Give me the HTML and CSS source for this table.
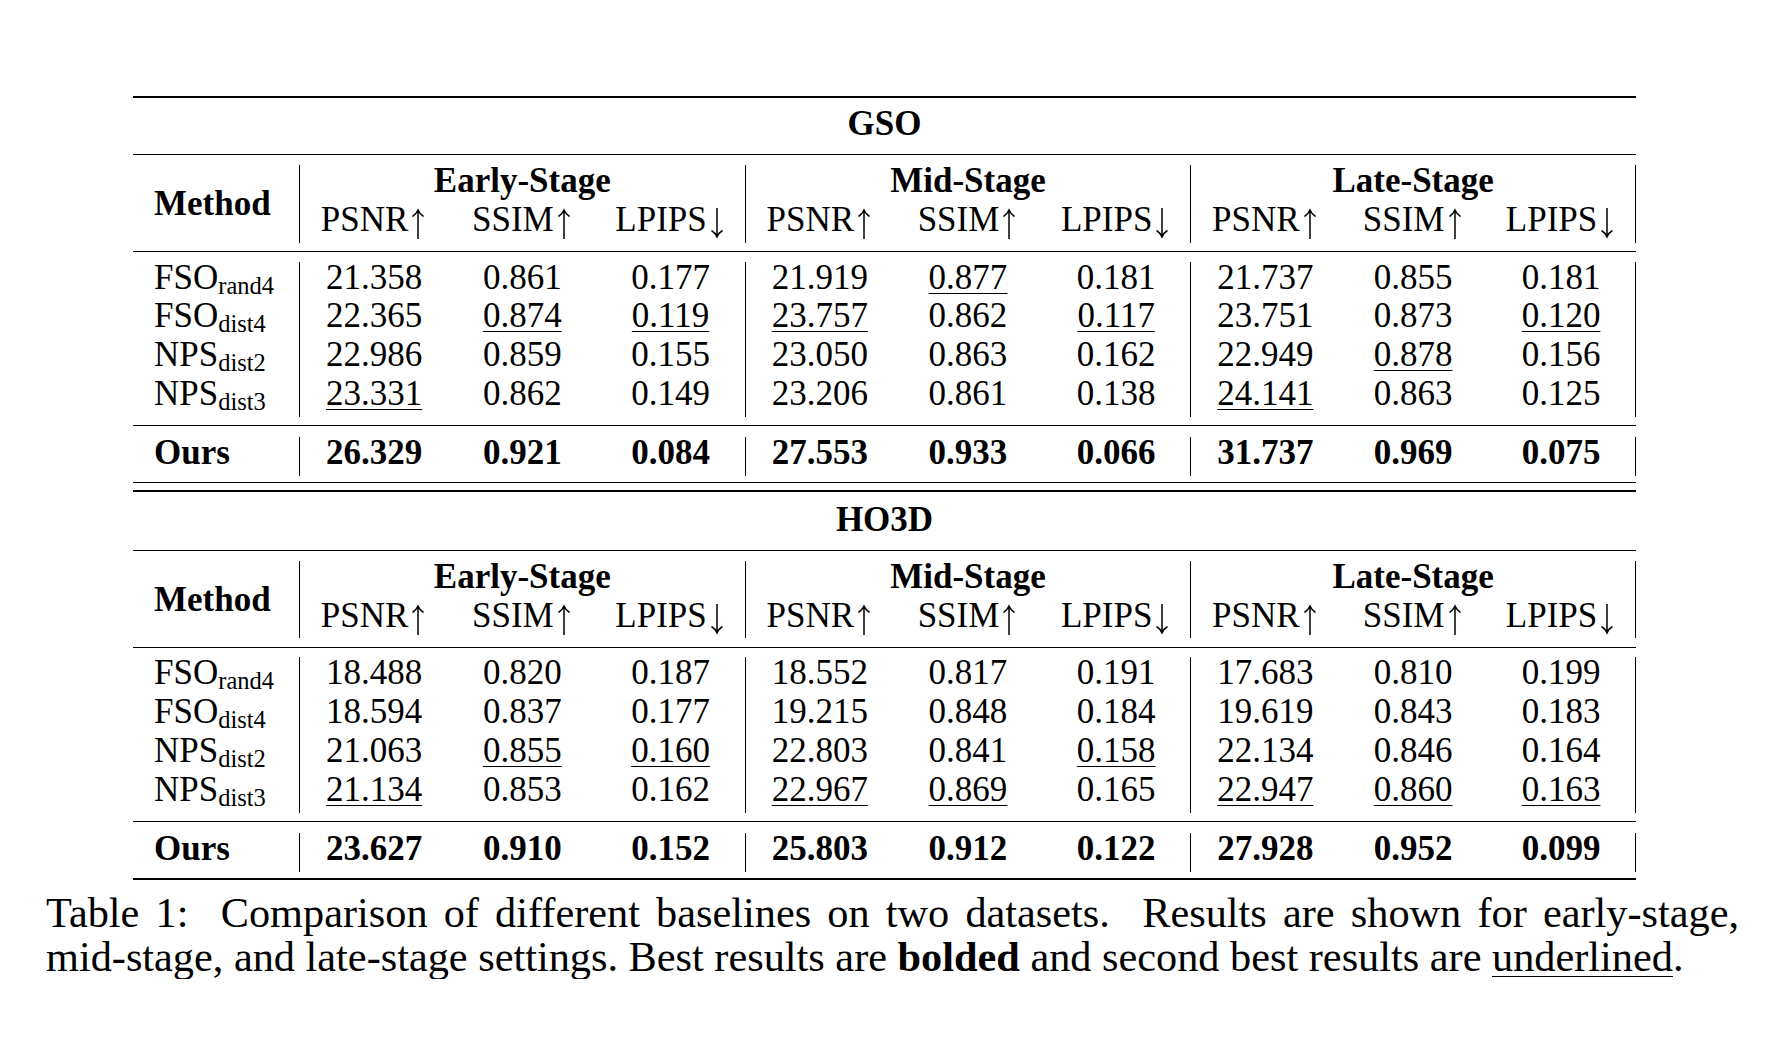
FILE: index.html
```html
<!DOCTYPE html>
<html lang="en">
<head>
<meta charset="utf-8">
<title>Table 1</title>
<link rel="stylesheet" href="styles.css">
</head>
<body>
<div class="page">
  <div class="table">
    <div class="rule thick"></div>
    <div class="title">GSO</div>
    <div class="rule"></div>
    <div class="band head">
      <div class="method">Method</div>
      <div class="group"><div class="cell stage">Early-Stage</div><div class="cell">PSNR<svg class="arr" viewBox="0 0 18 31" aria-label="↑"><path d="M9 2V31M3.5 8.5Q7 6.5 9 2Q11 6.5 14.5 8.5"/></svg></div><div class="cell">SSIM<svg class="arr" viewBox="0 0 18 31" aria-label="↑"><path d="M9 2V31M3.5 8.5Q7 6.5 9 2Q11 6.5 14.5 8.5"/></svg></div><div class="cell">LPIPS<svg class="arr" viewBox="0 0 18 31" aria-label="↓"><path d="M9 0V29M3.5 22.5Q7 24.5 9 29Q11 24.5 14.5 22.5"/></svg></div></div>
      <div class="group"><div class="cell stage">Mid-Stage</div><div class="cell">PSNR<svg class="arr" viewBox="0 0 18 31" aria-label="↑"><path d="M9 2V31M3.5 8.5Q7 6.5 9 2Q11 6.5 14.5 8.5"/></svg></div><div class="cell">SSIM<svg class="arr" viewBox="0 0 18 31" aria-label="↑"><path d="M9 2V31M3.5 8.5Q7 6.5 9 2Q11 6.5 14.5 8.5"/></svg></div><div class="cell">LPIPS<svg class="arr" viewBox="0 0 18 31" aria-label="↓"><path d="M9 0V29M3.5 22.5Q7 24.5 9 29Q11 24.5 14.5 22.5"/></svg></div></div>
      <div class="group last"><div class="cell stage">Late-Stage</div><div class="cell">PSNR<svg class="arr" viewBox="0 0 18 31" aria-label="↑"><path d="M9 2V31M3.5 8.5Q7 6.5 9 2Q11 6.5 14.5 8.5"/></svg></div><div class="cell">SSIM<svg class="arr" viewBox="0 0 18 31" aria-label="↑"><path d="M9 2V31M3.5 8.5Q7 6.5 9 2Q11 6.5 14.5 8.5"/></svg></div><div class="cell">LPIPS<svg class="arr" viewBox="0 0 18 31" aria-label="↓"><path d="M9 0V29M3.5 22.5Q7 24.5 9 29Q11 24.5 14.5 22.5"/></svg></div></div>
    </div>
    <div class="rule"></div>
    <div class="band data">
      <div class="names">
        <div class="cell">FSO<sub>rand4</sub></div>
        <div class="cell">FSO<sub>dist4</sub></div>
        <div class="cell">NPS<sub>dist2</sub></div>
        <div class="cell">NPS<sub>dist3</sub></div>
      </div>
      <div class="group">
        <div class="cell">21.358</div><div class="cell">0.861</div><div class="cell">0.177</div>
        <div class="cell">22.365</div><div class="cell"><span class="u">0.874</span></div><div class="cell"><span class="u">0.119</span></div>
        <div class="cell">22.986</div><div class="cell">0.859</div><div class="cell">0.155</div>
        <div class="cell"><span class="u">23.331</span></div><div class="cell">0.862</div><div class="cell">0.149</div>
      </div>
      <div class="group">
        <div class="cell">21.919</div><div class="cell"><span class="u">0.877</span></div><div class="cell">0.181</div>
        <div class="cell"><span class="u">23.757</span></div><div class="cell">0.862</div><div class="cell"><span class="u">0.117</span></div>
        <div class="cell">23.050</div><div class="cell">0.863</div><div class="cell">0.162</div>
        <div class="cell">23.206</div><div class="cell">0.861</div><div class="cell">0.138</div>
      </div>
      <div class="group last">
        <div class="cell">21.737</div><div class="cell">0.855</div><div class="cell">0.181</div>
        <div class="cell">23.751</div><div class="cell">0.873</div><div class="cell"><span class="u">0.120</span></div>
        <div class="cell">22.949</div><div class="cell"><span class="u">0.878</span></div><div class="cell">0.156</div>
        <div class="cell"><span class="u">24.141</span></div><div class="cell">0.863</div><div class="cell">0.125</div>
      </div>
    </div>
    <div class="rule"></div>
    <div class="band ours">
      <div class="names"><div class="cell">Ours</div></div>
      <div class="group"><div class="cell">26.329</div><div class="cell">0.921</div><div class="cell">0.084</div></div>
      <div class="group"><div class="cell">27.553</div><div class="cell">0.933</div><div class="cell">0.066</div></div>
      <div class="group last"><div class="cell">31.737</div><div class="cell">0.969</div><div class="cell">0.075</div></div>
    </div>
    <div class="rule"></div>
    <div class="gap"></div>
    <div class="rule thick"></div>
    <div class="title second">HO3D</div>
    <div class="rule"></div>
    <div class="band head">
      <div class="method">Method</div>
      <div class="group"><div class="cell stage">Early-Stage</div><div class="cell">PSNR<svg class="arr" viewBox="0 0 18 31" aria-label="↑"><path d="M9 2V31M3.5 8.5Q7 6.5 9 2Q11 6.5 14.5 8.5"/></svg></div><div class="cell">SSIM<svg class="arr" viewBox="0 0 18 31" aria-label="↑"><path d="M9 2V31M3.5 8.5Q7 6.5 9 2Q11 6.5 14.5 8.5"/></svg></div><div class="cell">LPIPS<svg class="arr" viewBox="0 0 18 31" aria-label="↓"><path d="M9 0V29M3.5 22.5Q7 24.5 9 29Q11 24.5 14.5 22.5"/></svg></div></div>
      <div class="group"><div class="cell stage">Mid-Stage</div><div class="cell">PSNR<svg class="arr" viewBox="0 0 18 31" aria-label="↑"><path d="M9 2V31M3.5 8.5Q7 6.5 9 2Q11 6.5 14.5 8.5"/></svg></div><div class="cell">SSIM<svg class="arr" viewBox="0 0 18 31" aria-label="↑"><path d="M9 2V31M3.5 8.5Q7 6.5 9 2Q11 6.5 14.5 8.5"/></svg></div><div class="cell">LPIPS<svg class="arr" viewBox="0 0 18 31" aria-label="↓"><path d="M9 0V29M3.5 22.5Q7 24.5 9 29Q11 24.5 14.5 22.5"/></svg></div></div>
      <div class="group last"><div class="cell stage">Late-Stage</div><div class="cell">PSNR<svg class="arr" viewBox="0 0 18 31" aria-label="↑"><path d="M9 2V31M3.5 8.5Q7 6.5 9 2Q11 6.5 14.5 8.5"/></svg></div><div class="cell">SSIM<svg class="arr" viewBox="0 0 18 31" aria-label="↑"><path d="M9 2V31M3.5 8.5Q7 6.5 9 2Q11 6.5 14.5 8.5"/></svg></div><div class="cell">LPIPS<svg class="arr" viewBox="0 0 18 31" aria-label="↓"><path d="M9 0V29M3.5 22.5Q7 24.5 9 29Q11 24.5 14.5 22.5"/></svg></div></div>
    </div>
    <div class="rule"></div>
    <div class="band data">
      <div class="names">
        <div class="cell">FSO<sub>rand4</sub></div>
        <div class="cell">FSO<sub>dist4</sub></div>
        <div class="cell">NPS<sub>dist2</sub></div>
        <div class="cell">NPS<sub>dist3</sub></div>
      </div>
      <div class="group">
        <div class="cell">18.488</div><div class="cell">0.820</div><div class="cell">0.187</div>
        <div class="cell">18.594</div><div class="cell">0.837</div><div class="cell">0.177</div>
        <div class="cell">21.063</div><div class="cell"><span class="u">0.855</span></div><div class="cell"><span class="u">0.160</span></div>
        <div class="cell"><span class="u">21.134</span></div><div class="cell">0.853</div><div class="cell">0.162</div>
      </div>
      <div class="group">
        <div class="cell">18.552</div><div class="cell">0.817</div><div class="cell">0.191</div>
        <div class="cell">19.215</div><div class="cell">0.848</div><div class="cell">0.184</div>
        <div class="cell">22.803</div><div class="cell">0.841</div><div class="cell"><span class="u">0.158</span></div>
        <div class="cell"><span class="u">22.967</span></div><div class="cell"><span class="u">0.869</span></div><div class="cell">0.165</div>
      </div>
      <div class="group last">
        <div class="cell">17.683</div><div class="cell">0.810</div><div class="cell">0.199</div>
        <div class="cell">19.619</div><div class="cell">0.843</div><div class="cell">0.183</div>
        <div class="cell">22.134</div><div class="cell">0.846</div><div class="cell">0.164</div>
        <div class="cell"><span class="u">22.947</span></div><div class="cell"><span class="u">0.860</span></div><div class="cell"><span class="u">0.163</span></div>
      </div>
    </div>
    <div class="rule"></div>
    <div class="band ours">
      <div class="names"><div class="cell">Ours</div></div>
      <div class="group"><div class="cell">23.627</div><div class="cell">0.910</div><div class="cell">0.152</div></div>
      <div class="group"><div class="cell">25.803</div><div class="cell">0.912</div><div class="cell">0.122</div></div>
      <div class="group last"><div class="cell">27.928</div><div class="cell">0.952</div><div class="cell">0.099</div></div>
    </div>
    <div class="rule thick"></div>
  </div>
  <div class="caption">
    <span class="line first">Table 1:&nbsp; Comparison of different baselines on two datasets.&nbsp; Results are shown for early-stage,</span>
    <span class="line">mid-stage, and late-stage settings.&nbsp;Best results are <b>bolded</b> and second best results are <span class="u">underlined</span>.</span>
  </div>
</div>
</body>
</html>
```

FILE: styles.css
```css
html, body {
  margin: 0;
  padding: 0;
  background: #ffffff;
}

body {
  font-family: "Liberation Serif", "Times New Roman", serif;
  color: #000000;
}

.page {
  padding-top: 96px;
}

.table {
  margin-left: 133px;
  width: 1503px;
  font-size: 35px;
}

.rule {
  height: 1px;
  background: #000000;
}

.rule.thick {
  height: 2px;
}

.gap {
  height: 7px;
}

.title {
  height: 56px;
  line-height: 52px;
  text-align: center;
  font-weight: bold;
}

.title.second {
  height: 58px;
  line-height: 56px;
}

.band {
  display: grid;
  grid-template-columns: 166px 1fr 1fr 1fr;
}

.band.head {
  padding: 10px 0 8.4px;
}

.band.data {
  padding: 9.6px 0 8.2px;
}

.band.ours {
  padding: 11px 0 6px;
  font-weight: bold;
}

.group {
  display: grid;
  grid-template-columns: repeat(3, 1fr);
  border-left: 1px solid #000000;
}

.group.last {
  border-right: 1px solid #000000;
}

.cell {
  height: 38.8px;
  line-height: 31px;
  text-align: center;
  white-space: nowrap;
}

.stage {
  grid-column: 1 / -1;
  font-weight: bold;
}

.arr {
  width: 18px;
  height: 31px;
  vertical-align: -8px;
  margin-left: 1px;
  fill: none;
  stroke: #000000;
  stroke-width: 1.5;
}

.names .cell {
  text-align: left;
  padding-left: 21px;
}

.method {
  display: flex;
  align-items: center;
  padding-left: 21px;
  font-weight: bold;
}

sub {
  font-size: 0.7em;
  line-height: 0;
  vertical-align: -0.2em;
}

.u {
  text-decoration: underline;
  text-decoration-thickness: 1.3px;
  text-underline-offset: 4px;
}

.caption {
  margin: 11px 0 0 46px;
  width: 1693px;
  font-size: 42.3px;
  line-height: 44px;
}

.caption .line {
  display: block;
  white-space: nowrap;
}

.caption .line.first {
  text-align: justify;
  text-align-last: justify;
  white-space: normal;
}

.caption .u {
  text-underline-offset: 5px;
}
```
